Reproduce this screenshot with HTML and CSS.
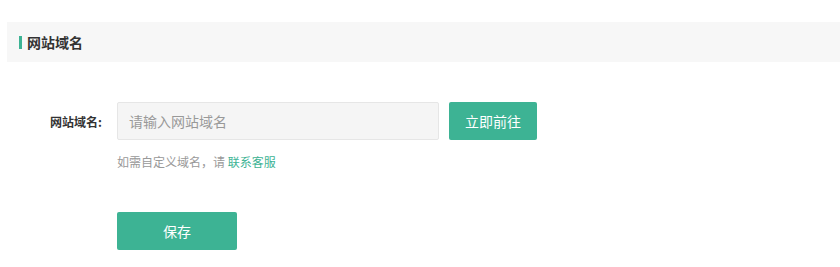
FILE: index.html
```html
<!DOCTYPE html>
<html lang="zh-CN">
<head>
    <meta charset="UTF-8">
    <title>网站域名</title>
    <link rel="stylesheet" href="styles.css">
</head>
<body>
    <div class="panel-head">
        <span class="panel-mark"></span>
        <h3>网站域名</h3>
    </div>

    <form class="domain-form">
        <div class="form-row">
            <label for="domain">网站域名:</label>
            <input type="text" id="domain" placeholder="请输入网站域名">
            <button type="button" class="btn btn-go">立即前往</button>
        </div>
        <p class="form-tip">如需自定义域名，请 <a href="#">联系客服</a></p>
        <div class="form-actions">
            <button type="button" class="btn btn-save">保存</button>
        </div>
    </form>
</body>
</html>
```

FILE: styles.css
```css
body {
    margin: 0;
    background-color: #ffffff;
    color: #333333;
    font-family: "Microsoft YaHei", "Noto Sans CJK SC", sans-serif;
}

.panel-head {
    display: flex;
    align-items: center;
    height: 40px;
    margin: 22px 0 0 7px;
    padding-left: 12px;
    background-color: #f7f7f7;
}

.panel-mark {
    width: 3px;
    height: 13px;
    margin-right: 5px;
    background-color: #3db394;
}

.panel-head h3 {
    margin: 0;
    font-size: 14px;
    font-weight: bold;
    color: #333333;
}

.domain-form {
    padding-top: 40px;
}

.form-row {
    display: flex;
    align-items: center;
}

.form-row label {
    width: 102px;
    margin-right: 15px;
    text-align: right;
    font-size: 12px;
    font-weight: bold;
    color: #333333;
}

.form-row input {
    box-sizing: border-box;
    width: 322px;
    height: 38px;
    padding: 0 11px;
    border: 1px solid #e6e6e6;
    border-radius: 2px;
    background-color: #f5f5f5;
    font-family: inherit;
    font-size: 14px;
    color: #333333;
    outline: none;
}

.form-row input::placeholder {
    color: #999999;
}

.btn {
    height: 38px;
    border: none;
    border-radius: 2px;
    background-color: #3db394;
    color: #ffffff;
    font-family: inherit;
    font-size: 14px;
    cursor: pointer;
}

.btn:hover {
    background-color: #35a286;
}

.btn-go {
    width: 88px;
    margin-left: 10px;
}

.form-tip {
    margin: 12px 0 0 117px;
    line-height: 20px;
    font-size: 12px;
    color: #999999;
}

.form-tip a {
    color: #3db394;
    text-decoration: none;
}

.form-actions {
    margin: 40px 0 0 117px;
}

.btn-save {
    width: 120px;
}
```
